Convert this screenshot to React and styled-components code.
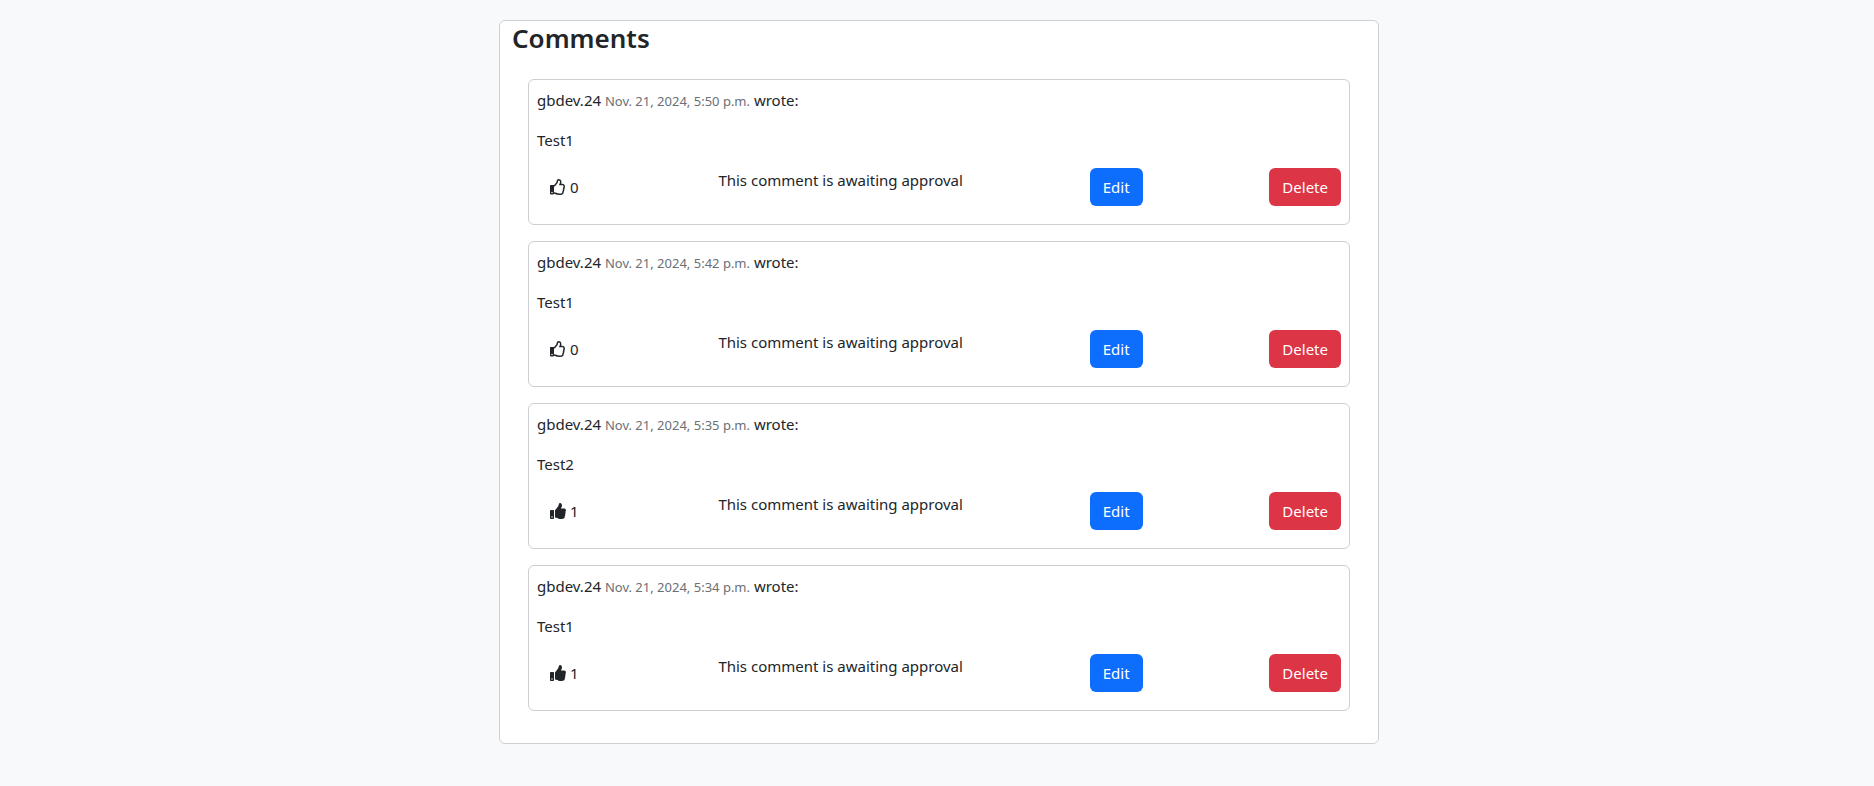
import React from "react";
import styled, { createGlobalStyle, css } from "styled-components";
import { FaRegThumbsUp, FaThumbsUp } from "react-icons/fa";

const GlobalStyle = createGlobalStyle`
  *, *::before, *::after { box-sizing: border-box; }
  body {
    margin: 0;
    background: #f8f9fb;
    color: #212529;
    font: 400 15px/24px "Segoe UI", "Noto Sans", "Liberation Sans", sans-serif;
  }
`;

const Page = styled.main`
  display: flex;
  justify-content: center;
  padding: 20px 0 40px 4px;
`;

const Panel = styled.section`
  width: 100%;
  max-width: 880px;
  padding: 0 28px 16px;
  background: #fff;
  border: 1px solid #cdcfd2;
  border-radius: 6px;
`;

const Title = styled.h2`
  margin: 0 -16px 24px;
  font-size: 26px;
  font-weight: 600;
  line-height: 34px;
`;

const List = styled.ul`
  margin: 0;
  padding: 0;
  list-style: none;
`;

const Card = styled.li`
  margin-bottom: 16px;
  padding: 8px;
  border: 1px solid #cdcfd2;
  border-radius: 6px;
`;

const Line = styled.p`
  margin: 0 0 16px;
`;

const Stamp = styled.time`
  font-size: 13px;
  line-height: 16px;
  color: #6a7076;
`;

const Actions = styled.div`
  display: flex;
  justify-content: space-between;
  align-items: flex-start;
  padding-bottom: 10px;
`;

const Status = styled.span``;

const Button = styled.button`
  display: inline-flex;
  align-items: center;
  justify-content: center;
  gap: 4px;
  height: 38px;
  padding: 0 12px;
  border: 1px solid transparent;
  border-radius: 6px;
  font: inherit;
  color: ${(p) => (p.$fill ? "#fff" : "inherit")};
  background: ${(p) => p.$fill || "transparent"};
  cursor: pointer;
`;

const thumbSize = css`
  width: 16px;
  height: 16px;
`;

const OutlineThumb = styled(FaRegThumbsUp)`
  ${thumbSize}
`;

const SolidThumb = styled(FaThumbsUp)`
  ${thumbSize}
`;

const comments = [
  { time: "5:50", body: "Test1", likes: 0 },
  { time: "5:42", body: "Test1", likes: 0 },
  { time: "5:35", body: "Test2", likes: 1 },
  { time: "5:34", body: "Test1", likes: 1 },
];

function Comment({ time, body, likes }) {
  const Thumb = likes > 0 ? SolidThumb : OutlineThumb;
  return (
    <Card>
      <Line>
        gbdev.24 <Stamp>Nov. 21, 2024, {time} p.m.</Stamp> wrote:
      </Line>
      <Line>{body}</Line>
      <Actions>
        <Button type="button" aria-pressed={likes > 0}>
          <Thumb aria-hidden="true" />
          {likes}
        </Button>
        <Status>This comment is awaiting approval</Status>
        <Button type="button" $fill="#0d6efd">Edit</Button>
        <Button type="button" $fill="#dc3545">Delete</Button>
      </Actions>
    </Card>
  );
}

export default function App() {
  return (
    <>
      <GlobalStyle />
      <Page>
        <Panel>
          <Title>Comments</Title>
          <List>
            {comments.map((c) => (
              <Comment key={c.time} {...c} />
            ))}
          </List>
        </Panel>
      </Page>
    </>
  );
}
